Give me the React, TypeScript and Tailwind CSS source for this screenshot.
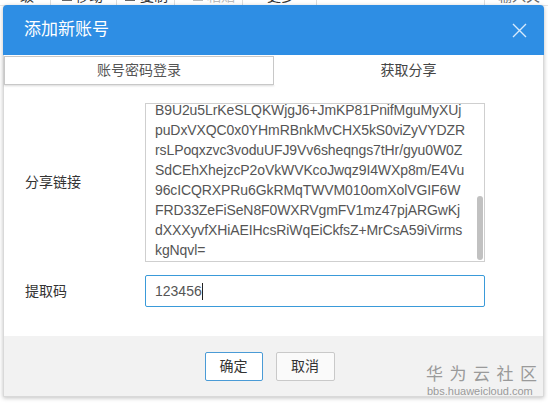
import React from "react";

const lines = [
  "B9U2u5LrKeSLQKWjgJ6+JmKP81PnifMguMyXUj",
  "puDxVXQC0x0YHmRBnkMvCHX5kS0viZyVYDZR",
  "rsLPoqxzvc3voduUFJ9Vv6sheqngs7tHr/gyu0W0Z",
  "SdCEhXhejzcP2oVkWVKcoJwqz9I4WXp8m/E4Vu",
  "96cICQRXPRu6GkRMqTWVM010omXolVGIF6W",
  "FRD33ZeFiSeN8F0WXRVgmFV1mz47pjARGwKj",
  "dXXXyvfXHiAEIHcsRiWqEiCkfsZ+MrCsA59iVirms",
  "kgNqvl=",
];

const cjk = { fontFamily: '"Liberation Sans", "Noto Sans CJK SC", sans-serif' };

export default function App() {
  return (
    <div className="relative w-[548px] h-[405px] overflow-hidden bg-white" style={cjk}>
      {/* background toolbar (mostly hidden behind the dialog) */}
      <div className="-mt-[14px] h-[20px] flex items-center text-[14px] leading-[20px] text-[#333] border-b border-[#e6e6e6]">
        <div className="w-[51px] h-full flex items-center pl-[20px] border-r border-[#ddd]">级</div>
        <div className="w-[66px] h-full flex items-center gap-[3px] pl-[11px] border-r border-[#ddd]">
          <span className="w-[10px] h-[10px] bg-[#666]" />移动
        </div>
        <div className="w-[58px] h-full flex items-center gap-[5px] pl-[8px] border-r border-[#ddd]">
          <span className="w-[10px] h-[10px] border border-[#666]" />复制
        </div>
        <div className="w-[68px] h-full flex items-center gap-[4px] pl-[18px] border-r border-[#ddd] text-[#bbb]">
          <span className="w-[10px] h-[10px] border border-[#bbb]" />粘贴
        </div>
        <div className="w-[74px] h-full flex items-center pl-[24px] border-r border-[#ddd]">更多</div>
        <div className="w-[168px] h-full border-r border-[#ddd]" />
        <div className="flex-1 h-full pl-[13px] text-[#666]">输入关键字</div>
      </div>

      {/* modal dialog */}
      <div className="absolute left-[3px] top-[5px] w-[541px] h-[392px] flex flex-col bg-white rounded-t-[4px] border border-[#d9d9d9] shadow-[0_1px_4px_rgba(0,0,0,0.25)]">
        <div className="h-[50px] -mx-px -mt-px bg-[#2e8ee4] rounded-t-[4px] flex items-center justify-between pl-[21px] pr-[17px] shrink-0">
          <span className="text-white text-[17px]">添加新账号</span>
          <svg width="15" height="15" viewBox="0 0 15 15">
            <path d="M1 1L14 14M14 1L1 14" stroke="#d6eafc" strokeWidth="1.4" />
          </svg>
        </div>
        <div className="mt-px h-[29px] flex shrink-0 text-[14px] text-[#555]">
          <div className="w-[270px] h-full flex items-center justify-center border border-[#c8c8c8] shadow-[0_1px_2px_rgba(0,0,0,0.15)] bg-white">
            账号密码登录
          </div>
          <div className="flex-1 h-full flex items-center justify-center bg-white text-[#444]">获取分享</div>
        </div>

        <div className="flex-1 flex flex-col gap-[13px] pt-[18px] pl-[21px]">
          <div className="flex items-center">
            <div className="w-[120px] text-[14px] text-[#333]">分享链接</div>
            <div className="relative w-[340px] h-[159px] border border-[#cfcfcf] overflow-hidden">
              <div className="-mt-[4px] pl-[9px] text-[14px] leading-[20px] text-[#555] whitespace-nowrap tracking-[-0.1px]">
                {lines.map((l, i) => (
                  <div key={i}>{l}</div>
                ))}
              </div>
              <div className="absolute right-[1px] top-[92px] w-[6px] h-[64px] rounded-[3px] bg-[#c1c1c1]" />
            </div>
          </div>
          <div className="flex items-center">
            <div className="w-[120px] text-[14px] text-[#333]">提取码</div>
            <div className="w-[340px] h-[32px] border border-[#3a9ad9] rounded-[2px] flex items-center pl-[9px] text-[14px] text-[#555]">
              123456<span className="w-px h-[17px] bg-[#222]" />
            </div>
          </div>
        </div>

        <div className="h-[60px] shrink-0 bg-[#f2f2f2] flex items-center justify-center gap-[13px] pr-[8px]">
          <button className="w-[58px] h-[29px] border border-[#4a9bd6] rounded-[2px] bg-white text-[14px] text-[#333]">
            确定
          </button>
          <button className="w-[59px] h-[29px] border border-[#c9c9c9] rounded-[2px] bg-[#fafafa] text-[14px] text-[#333]">
            取消
          </button>
        </div>
      </div>

      {/* watermark */}
      <div className="absolute left-[426px] top-[364px] flex flex-col items-start text-[#9a9a9a]">
        <div className="text-[17px] leading-[22px] tracking-[6.5px]">华为云社区</div>
        <div className="text-[11px] leading-[12px] -mt-[1px] pl-[1px]" style={{ fontFamily: '"Liberation Sans", sans-serif' }}>
          bbs.huaweicloud.com
        </div>
      </div>
    </div>
  );
}
